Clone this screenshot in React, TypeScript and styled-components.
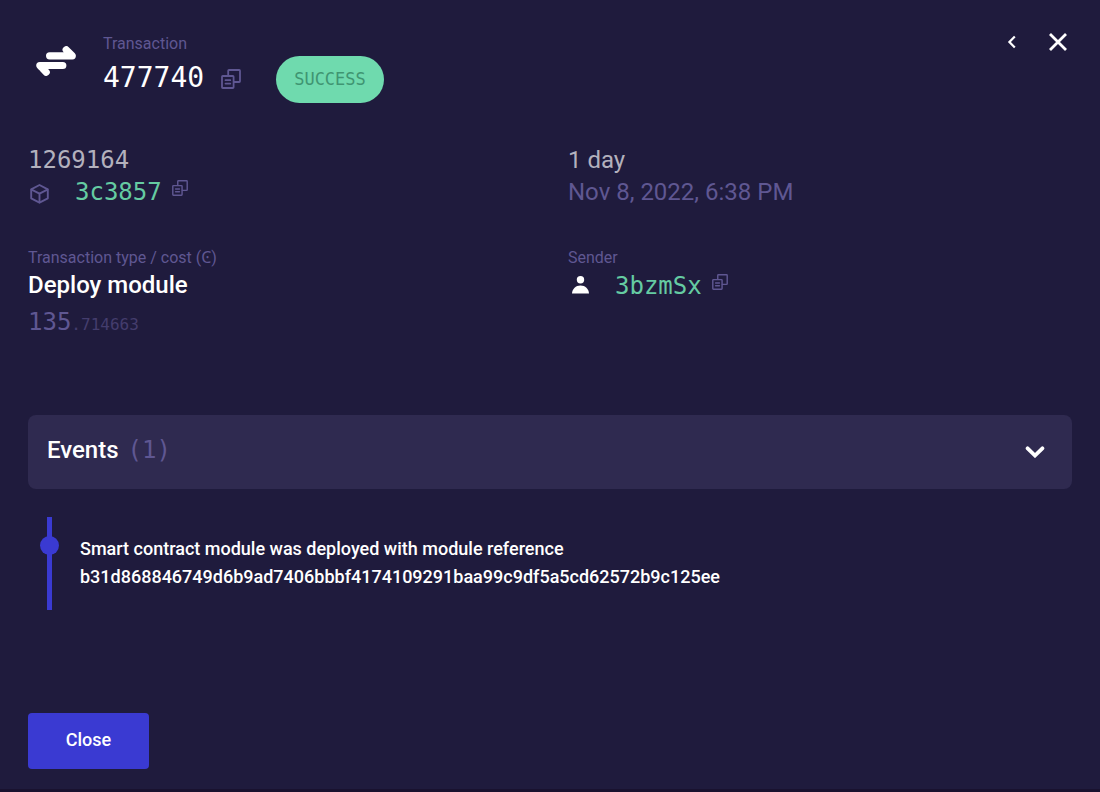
import React, { useState } from "react";
import styled, { createGlobalStyle } from "styled-components";

const SANS = `Roboto, "Noto Sans", "DejaVu Sans", sans-serif`;
const MONO = `"DejaVu Sans Mono", "Liberation Mono", monospace`;

const color = {
  page: "#1f1b3d",
  edge: "#19122f",
  panel: "#2f2a50",
  white: "#ffffff",
  soft: "#b3b1bd",
  muted: "#5f5792",
  faint: "#443d6d",
  green: "#65cba2",
  pill: "#6fdaae",
  pillText: "#3f9572",
  blue: "#3a3ad2",
};

const GlobalStyle = createGlobalStyle`
  *, *::before, *::after { box-sizing: border-box; }
  body { margin: 0; background: ${color.page}; font-family: ${SANS}; color: ${color.white}; }
  button { font: inherit; color: inherit; border: 0; padding: 0; background: none; cursor: pointer; }
  h1, ul { margin: 0; padding: 0; font-weight: 400; }
  svg { display: block; }
`;

const Page = styled.main`
  display: flex;
  flex-direction: column;
  min-height: 100vh;
  padding: 32px 28px 20px;
  border-bottom: 3px solid ${color.edge};
`;

const Header = styled.header`
  display: flex;
  align-items: flex-start;
`;

const Emblem = styled.div`
  padding: 14px 27px 0 8px;
`;

const Label = styled.div`
  font-size: 16px;
  line-height: 24px;
  color: ${color.muted};
`;

const TitleRow = styled.div`
  display: flex;
  align-items: center;
  gap: 17px;
`;

const TxHash = styled.h1`
  font-family: ${MONO};
  font-size: 28px;
  line-height: 44px;
`;

const IconButton = styled.button`
  display: inline-flex;
  color: ${color.muted};
`;

const TitleCopy = styled.span`
  display: inline-flex;
  padding-top: 2px;
`;

const RowCopy = styled.span`
  display: inline-flex;
  padding-bottom: 8px;
`;

const Badge = styled.span`
  margin: 24px 0 0 35px;
  padding: 0 18px;
  border-radius: 24px;
  background: ${color.pill};
  color: ${color.pillText};
  font-family: ${MONO};
  font-size: 17px;
  line-height: 47px;
`;

const Actions = styled.nav`
  display: flex;
  align-items: center;
  gap: 31px;
  margin-left: auto;
  padding-right: 4px;
`;

const ActionButton = styled.button`
  display: inline-flex;
  color: ${color.white};
`;

const Details = styled.div`
  display: grid;
  grid-template-columns: 1fr 1fr;
  gap: 38px 36px;
  margin-top: 41px;
`;

const Value = styled.div<{ $tone: string; $mono?: boolean; $strong?: boolean; $tall?: boolean }>`
  font-family: ${(p) => (p.$mono ? MONO : SANS)};
  font-size: 24px;
  font-weight: ${(p) => (p.$strong ? 500 : 400)};
  line-height: ${(p) => (p.$tall ? 32 : 30)}px;
  color: ${(p) => p.$tone};
`;

const LinkRow = styled.div`
  display: flex;
  align-items: center;
  height: 32px;
`;

const LeadIcon = styled.span<{ $tone: string; $raised?: boolean }>`
  width: 47px;
  padding: ${(p) => (p.$raised ? "0 0 2px 3px" : "4px 0 0 2px")};
  color: ${(p) => p.$tone};
`;

const HashLink = styled.a`
  margin-right: 10px;
  font-family: ${MONO};
  font-size: 24px;
  line-height: 32px;
  color: ${color.green};
  text-decoration: none;
`;

const Cost = styled.div`
  margin-top: 6px;
  font-family: ${MONO};
  font-size: 24px;
  line-height: 32px;
  color: ${color.muted};
`;

const Fraction = styled.span`
  font-size: 16px;
  color: ${color.faint};
`;

const Accordion = styled.button`
  display: flex;
  align-items: center;
  justify-content: space-between;
  width: 100%;
  height: 74px;
  margin-top: 74px;
  padding: 0 27px 0 19px;
  border-radius: 8px;
  background: ${color.panel};
  text-align: left;
`;

const AccordionTitle = styled.span`
  display: flex;
  align-items: baseline;
  gap: 9px;
  padding-bottom: 4px;
  font-size: 24px;
  font-weight: 500;
  line-height: 32px;
`;

const Count = styled.span`
  font-family: ${MONO};
  font-weight: 400;
  color: ${color.muted};
`;

const EventList = styled.ul`
  margin-top: 28px;
  padding-left: 19px;
  list-style: none;
`;

const EventItem = styled.li`
  position: relative;
  padding: 18px 0 19px 28px;
  border-left: 5px solid ${color.blue};
  font-size: 18px;
  font-weight: 500;
  line-height: 28px;
  overflow-wrap: anywhere;

  &::before {
    content: "";
    position: absolute;
    top: 19px;
    left: -12px;
    width: 19px;
    height: 19px;
    border-radius: 50%;
    background: ${color.blue};
  }
`;

const Hash = styled.span`
  display: block;
`;

const Footer = styled.footer`
  margin-top: auto;
`;

const CloseButton = styled.button`
  width: 121px;
  height: 56px;
  padding-bottom: 4px;
  border-radius: 4px;
  background: ${color.blue};
  font-size: 18px;
  font-weight: 500;
`;

function CopyIcon({ size }: { size: number }) {
  return (
    <svg width={size} height={size} viewBox="0 0 20 20" fill="none" stroke="currentColor" strokeWidth="1.8" strokeLinecap="round" strokeLinejoin="round" aria-hidden="true">
      <rect x="1" y="7" width="11.6" height="12" rx="0.8" />
      <path d="M7.2 6.6V1.8a.8.8 0 0 1 .8-.8h10.2a.8.8 0 0 1 .8.8v10.4a.8.8 0 0 1-.8.8h-5.2" />
      <path d="M4.5 11.2h4.8M4.5 14.6h4.8" />
    </svg>
  );
}

function TransferIcon() {
  return (
    <svg width="40" height="30" viewBox="0 0 40 30" fill="none" stroke="currentColor" strokeWidth="7.2" strokeLinecap="round" strokeLinejoin="round" aria-hidden="true">
      <path d="M13.6 9.8H36.3L30.2 3.8M32 8h2" />
      <path d="M26.8 19.5H3.8L10.2 26.2M6 21.5h2" />
    </svg>
  );
}

function CubeIcon() {
  return (
    <svg width="19" height="20" viewBox="0 0 19 20" fill="none" stroke="currentColor" strokeWidth="1.9" strokeLinejoin="round" strokeLinecap="round" aria-hidden="true">
      <path d="M9.5 1 17.8 5.3v9L9.5 18.7 1.2 14.3v-9Z" />
      <path d="M1.6 5.6 9.5 9.7l7.9-4.1M9.5 9.7v8.6" />
    </svg>
  );
}

function PersonIcon() {
  return (
    <svg width="19" height="20" viewBox="0 0 19 20" fill="currentColor" aria-hidden="true">
      <circle cx="9.5" cy="4.7" r="3.7" />
      <path d="M1 18.5C1.3 13.6 4.7 10.4 9.5 10.4s8.2 3.2 8.5 8.1Z" />
    </svg>
  );
}

function BackIcon() {
  return (
    <svg width="10" height="14" viewBox="0 0 10 14" fill="none" stroke="currentColor" strokeWidth="2.2" aria-hidden="true">
      <path d="M7.8 1.5 2.4 7l5.4 5.5" />
    </svg>
  );
}

function CrossIcon() {
  return (
    <svg width="20" height="20" viewBox="0 0 20 20" fill="none" stroke="currentColor" strokeWidth="2.8" aria-hidden="true">
      <path d="m2 2 16 16M18 2 2 18" />
    </svg>
  );
}

function ChevronIcon() {
  return (
    <svg width="20" height="12" viewBox="0 0 20 12" fill="none" stroke="currentColor" strokeWidth="3.8" strokeLinecap="round" aria-hidden="true">
      <path d="m2.6 2.3 7.4 7.2 7.4-7.2" />
    </svg>
  );
}

function Copy({ size, label }: { size: number; label: string }) {
  return (
    <IconButton type="button" aria-label={label}>
      <CopyIcon size={size} />
    </IconButton>
  );
}

export default function App() {
  const [open, setOpen] = useState(true);
  return (
    <>
      <GlobalStyle />
      <Page>
        <Header>
          <Emblem>
            <TransferIcon />
          </Emblem>
          <div>
            <Label>Transaction</Label>
            <TitleRow>
              <TxHash>477740</TxHash>
              <TitleCopy>
                <Copy size={20} label="Copy transaction hash" />
              </TitleCopy>
            </TitleRow>
          </div>
          <Badge>SUCCESS</Badge>
          <Actions>
            <ActionButton type="button" aria-label="Back">
              <BackIcon />
            </ActionButton>
            <ActionButton type="button" aria-label="Close panel">
              <CrossIcon />
            </ActionButton>
          </Actions>
        </Header>

        <Details>
          <section>
            <Value $tone={color.soft} $mono $tall>1269164</Value>
            <LinkRow>
              <LeadIcon $tone={color.muted}>
                <CubeIcon />
              </LeadIcon>
              <HashLink href="#block">3c3857</HashLink>
              <RowCopy>
                <Copy size={16} label="Copy block hash" />
              </RowCopy>
            </LinkRow>
          </section>
          <section>
            <Value $tone={color.soft} $tall>1 day</Value>
            <Value $tone={color.muted} $tall>Nov 8, 2022, 6:38 PM</Value>
          </section>
          <section>
            <Label>Transaction type / cost (Ͼ)</Label>
            <Value $tone={color.white} $strong>Deploy module</Value>
            <Cost>
              135<Fraction>.714663</Fraction>
            </Cost>
          </section>
          <section>
            <Label>Sender</Label>
            <LinkRow>
              <LeadIcon $tone={color.white} $raised>
                <PersonIcon />
              </LeadIcon>
              <HashLink href="#account">3bzmSx</HashLink>
              <RowCopy>
                <Copy size={16} label="Copy sender address" />
              </RowCopy>
            </LinkRow>
          </section>
        </Details>

        <Accordion type="button" aria-expanded={open} onClick={() => setOpen(!open)}>
          <AccordionTitle>
            Events <Count>(1)</Count>
          </AccordionTitle>
          <ChevronIcon />
        </Accordion>
        {open && (
          <EventList>
            <EventItem>
              Smart contract module was deployed with module reference
              <Hash>b31d868846749d6b9ad7406bbbf4174109291baa99c9df5a5cd62572b9c125ee</Hash>
            </EventItem>
          </EventList>
        )}

        <Footer>
          <CloseButton type="button">Close</CloseButton>
        </Footer>
      </Page>
    </>
  );
}
